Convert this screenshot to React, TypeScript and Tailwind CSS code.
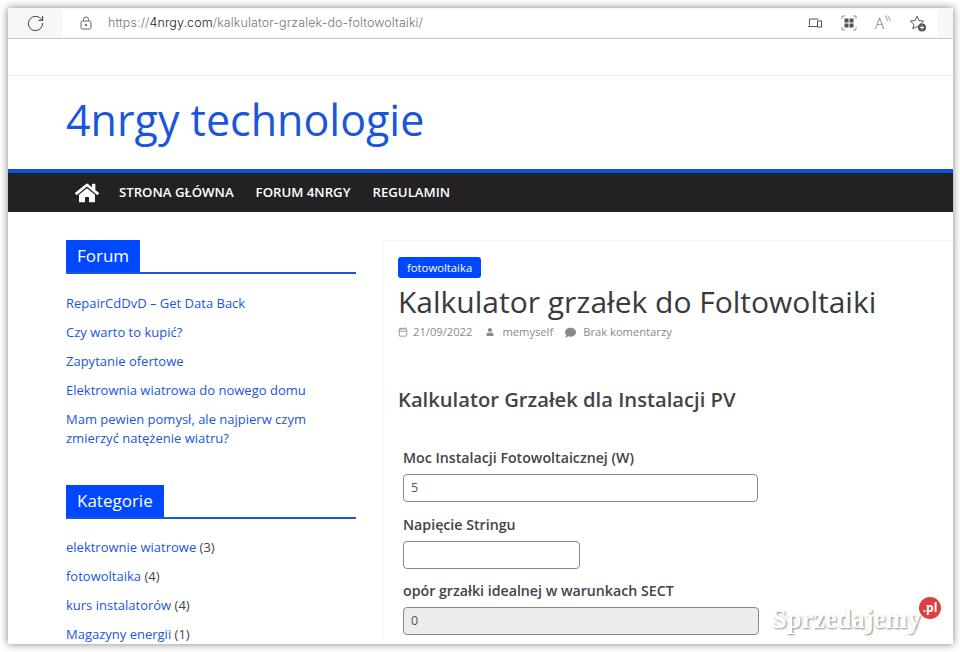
import { Calendar, RotateCw } from "lucide-react";
import { FaComment, FaHome, FaUser } from "react-icons/fa";

const forumLinks = [
  "RepairCdDvD – Get Data Back",
  "Czy warto to kupić?",
  "Zapytanie ofertowe",
  "Elektrownia wiatrowa do nowego domu",
];

const categories = [
  { name: "elektrownie wiatrowe", count: 3 },
  { name: "fotowoltaika", count: 4 },
  { name: "kurs instalatorów", count: 4 },
  { name: "Magazyny energii", count: 1 },
];

function WidgetTitle({ title }: { title: string }) {
  return (
    <div className="border-b-2 border-[#1a56db] flex">
      <span className="bg-[#0048ff] text-white text-[17px] leading-[31px] h-[32px] px-[11px]">{title}</span>
    </div>
  );
}

function BrowserIcons() {
  return (
    <div className="flex items-center gap-[18px] text-[#555]">
      <svg width="16" height="14" viewBox="0 0 16 14" fill="none" stroke="currentColor">
        <path d="M2.5 9.5V3h9M1 10.5h9" />
        <rect x="10.5" y="5" width="4" height="6" />
      </svg>
      <svg width="16" height="16" viewBox="0 0 16 16" fill="none" stroke="currentColor">
        <path d="M1 4V1h3M12 1h3v3M15 12v3h-3M4 15H1v-3" strokeOpacity="0.6" />
        <rect x="4" y="4" width="3" height="3" fill="currentColor" />
        <rect x="9" y="4" width="3" height="3" fill="currentColor" />
        <rect x="4" y="9" width="3" height="3" fill="currentColor" />
        <rect x="9" y="9" width="3" height="3" fill="currentColor" />
      </svg>
      <div className="relative w-[16px] h-[16px] flex items-center">
        <span className="text-[15px] leading-none font-light text-[#666]">A</span>
        <svg className="absolute right-0 top-0" width="7" height="8" viewBox="0 0 7 8" fill="none" stroke="#888" strokeWidth="0.8">
          <path d="M1 0.5 4 6M3.5 0.5 6.5 6" />
        </svg>
      </div>
      <svg width="18" height="17" viewBox="0 0 18 17" fill="none">
        <path d="M8 1.2 10 5.6l4.6.5-3.4 3.1.9 4.6L8 11.5l-4.1 2.3.9-4.6L1.4 6.1 6 5.6z" stroke="#555" />
        <circle cx="13" cy="12.5" r="4" fill="#555" />
        <path d="M13 10.5v4M11 12.5h4" stroke="#fff" />
      </svg>
    </div>
  );
}

function Field({ label, value, width, disabled }: { label: string; value: string; width: string; disabled?: boolean }) {
  return (
    <div className="flex flex-col">
      <label className="text-[14.2px] font-semibold leading-[20px] text-[#444]">{label}</label>
      <div
        className={`${width} h-[28px] mt-[6px] rounded-[4px] border border-[#8a8a8a] px-[7px] text-[12.5px] leading-[26px] text-[#555] ${
          disabled ? "bg-[#ececec]" : "bg-white"
        }`}
      >
        {value}
      </div>
    </div>
  );
}

export default function App() {
  return (
    <div className="w-[960px] h-[652px] bg-white pt-[8px] pl-[8px] pr-[7px] pb-[8px] font-['Open_Sans',sans-serif] overflow-hidden relative">
      <div className="h-[636px] bg-white overflow-hidden flex flex-col shadow-[0_0_8px_rgba(0,0,0,0.5)]">
        {/* Browser toolbar */}
        <div className="h-[31px] shrink-0 bg-[#f7f7f7] border-b border-[#c9c9c9] flex items-center">
          <div className="w-[54px] flex justify-center shrink-0">
            <RotateCw size={19} strokeWidth={1.2} className="text-[#333]" />
          </div>
          <div className="h-[27px] w-[876px] bg-white flex items-center pl-[18px] pr-[11px]">
            <svg width="12" height="14" viewBox="0 0 12 14" fill="none" stroke="#666">
              <rect x="1" y="5" width="10" height="8" rx="1.5" />
              <path d="M3.5 5V3.5a2.5 2.5 0 0 1 5 0V5" />
              <circle cx="6" cy="9" r="0.8" fill="#666" />
            </svg>
            <span className="ml-[16px] text-[12.5px] text-[#777] flex-1 font-['Inter',sans-serif] font-light tracking-[0.1px]">
              https://<span className="text-[#222]">4nrgy.com</span>/kalkulator-grzalek-do-foltowoltaiki/
            </span>
            <BrowserIcons />
          </div>
        </div>

        <div className="h-[37px] shrink-0 border-b border-[#f0f0f0]" />

        {/* Site title */}
        <div className="h-[93px] shrink-0 pl-[58px] flex items-center">
          <h1 className="text-[43px] text-[#1a56db] leading-none pb-[6px]">4nrgy technologie</h1>
        </div>

        {/* Nav */}
        <nav className="h-[43px] shrink-0 border-t-[4px] border-[#0f4fe0] bg-[#222] flex items-center pl-[67px] text-white">
          <FaHome size={24} />
          <div className="flex gap-[22px] ml-[20px] text-[13.2px] font-semibold">
            <span>STRONA GŁÓWNA</span>
            <span>FORUM 4NRGY</span>
            <span>REGULAMIN</span>
          </div>
        </nav>

        {/* Main */}
        <div className="flex flex-1 min-h-0 pl-[58px] pt-[28px]">
          <aside className="w-[290px] shrink-0">
            <WidgetTitle title="Forum" />
            <ul className="mt-[20px] text-[13px] leading-[19px] text-[#1a56db] flex flex-col gap-[10px]">
              {forumLinks.map((link) => (
                <li key={link}>{link}</li>
              ))}
              <li>
                Mam pewien pomysł, ale najpierw czym
                <br />
                zmierzyć natężenie wiatru?
              </li>
            </ul>
            <div className="mt-[37px]">
              <WidgetTitle title="Kategorie" />
            </div>
            <ul className="mt-[19px] text-[13px] leading-[19px] flex flex-col gap-[10px]">
              {categories.map((cat) => (
                <li key={cat.name} className="text-[#444]">
                  <span className="text-[#1a56db]">{cat.name}</span> ({cat.count})
                </li>
              ))}
            </ul>
          </aside>

          <main className="ml-[27px] flex-1 border-l border-t border-[#f5f5f5] pl-[14px] pt-[16px]">
            <span className="inline-block bg-[#0048ff] text-white text-[11.3px] leading-[21px] h-[21px] px-[9px] rounded-[3px] align-top">
              fotowoltaika
            </span>
            <h2 className="text-[30px] leading-[36px] text-[#3a3a3a] mt-[3px] whitespace-nowrap">Kalkulator grzałek do Foltowoltaiki</h2>
            <div className="flex items-center text-[11.2px] text-[#8a8a8a] leading-[16px] mt-[4px]">
              <Calendar size={10} />
              <span className="ml-[5px]">21/09/2022</span>
              <FaUser size={8} className="ml-[14px]" />
              <span className="ml-[8px]">memyself</span>
              <FaComment size={11} className="ml-[12px]" />
              <span className="ml-[7px]">Brak komentarzy</span>
            </div>
            <h3 className="text-[20.2px] font-semibold text-[#444] leading-[28px] mt-[45px]">Kalkulator Grzałek dla Instalacji PV</h3>
            <div className="pl-[5px] mt-[35px] flex flex-col gap-[12.5px]">
              <Field label="Moc Instalacji Fotowoltaicznej (W)" value="5" width="w-[355px]" />
              <Field label="Napięcie Stringu" value="" width="w-[177px]" />
              <Field label="opór grzałki idealnej w warunkach SECT" value="0" width="w-[356px]" disabled />
            </div>
          </main>
        </div>
      </div>

      {/* Watermark */}
      <div className="absolute left-[772px] top-[604px] text-[26.5px] leading-[30px] font-bold text-white font-['Liberation_Serif',serif] [text-shadow:1px_1px_2px_#888]">
        Sprzedajemy
      </div>
      <div className="absolute left-[919px] top-[597px] w-[22px] h-[22px] rounded-full bg-[#d9403f] text-white text-[12px] font-bold leading-[21px] text-center">
        .pl
      </div>
    </div>
  );
}
